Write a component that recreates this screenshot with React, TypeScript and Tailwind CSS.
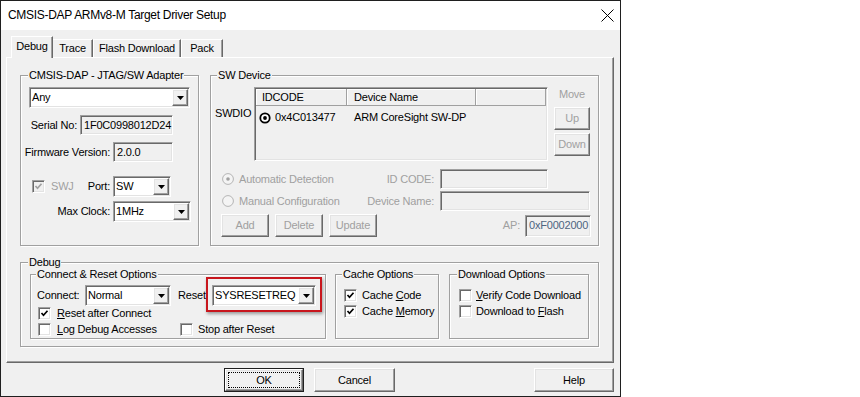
import React from "react";

const sunken =
  "border border-t-[#a0a0a0] border-l-[#a0a0a0] border-r-white border-b-white shadow-[inset_1px_1px_0_#696969,inset_-1px_-1px_0_#e3e3e3]";
const raised =
  "border border-t-white border-l-white border-r-[#696969] border-b-[#696969] shadow-[inset_-1px_-1px_0_#a0a0a0,inset_1px_1px_0_#e3e3e3]";
const etched = "border border-[#a0a0a0] shadow-[inset_1px_1px_0_#fff,1px_1px_0_#fff]";

function Arrow() {
  return (
    <svg width="7" height="4" viewBox="0 0 7 4">
      <path d="M0 0H7L3.5 4Z" fill="#000" />
    </svg>
  );
}

function Combo({ className, value }: { className: string; value: string }) {
  return (
    <div className={`${sunken} ${className} bg-white h-[21px] flex p-[1px] shrink-0`}>
      <div className="flex-1 pl-[1px] flex items-center whitespace-nowrap overflow-hidden">{value}</div>
      <div className={`${raised} w-[16px] bg-[#f0f0f0] flex items-center justify-center`}>
        <Arrow />
      </div>
    </div>
  );
}

function TextBox({ className, children }: { className: string; children?: React.ReactNode }) {
  return (
    <div className={`${sunken} ${className} bg-[#f0f0f0] flex items-center pl-[3px] whitespace-nowrap shrink-0`}>
      {children}
    </div>
  );
}

function Btn({
  className,
  label,
  disabled,
}: {
  className: string;
  label: React.ReactNode;
  disabled?: boolean;
}) {
  return (
    <div
      className={`${raised} ${className} bg-[#f0f0f0] flex items-center justify-center shrink-0 ${
        disabled ? "text-[#a0a0a0]" : "text-black"
      }`}
    >
      {label}
    </div>
  );
}

function Check({ checked, disabled }: { checked?: boolean; disabled?: boolean }) {
  return (
    <div
      className={`${sunken} w-[13px] h-[13px] shrink-0 flex items-center justify-center ${
        disabled ? "bg-[#f0f0f0]" : "bg-white"
      }`}
    >
      {checked && (
        <svg width="9" height="9" viewBox="0 0 9 9">
          <polyline
            points="1.5,4 3.5,6.2 7.5,1.8"
            fill="none"
            stroke={disabled ? "#a0a0a0" : "#000"}
            strokeWidth="1.7"
          />
        </svg>
      )}
    </div>
  );
}

function Radio({ checked }: { checked?: boolean }) {
  return (
    <svg width="12" height="12" viewBox="0 0 12 12" className="shrink-0">
      <circle cx="6" cy="6" r="5.4" fill="#f4f4f4" stroke="#b4b4b4" strokeWidth="1" />
      {checked && <circle cx="6" cy="6" r="1.8" fill="#a0a0a0" />}
    </svg>
  );
}

function GroupLabel({ className, text }: { className: string; text: string }) {
  return (
    <div className={`-mt-[7px] h-[13px] px-[1px] bg-[#f0f0f0] self-start whitespace-nowrap ${className}`}>
      {text}
    </div>
  );
}

function U({ children }: { children: React.ReactNode }) {
  return <span className="underline underline-offset-[1px]">{children}</span>;
}

export default function App() {
  return (
    <div className="w-[860px] h-[397px] bg-white font-['Liberation_Sans',Arial,sans-serif] text-[11px] leading-[13px] tracking-[-0.2px] text-black">
      <div className="w-[621px] h-[397px] border border-[#1f1f1f] flex flex-col bg-[#f0f0f0]">
        {/* Title bar */}
        <div className="h-[29px] shrink-0 bg-white flex items-center">
          <div className="pl-[7px] text-[12px] tracking-[-0.3px]">CMSIS-DAP ARMv8-M Target Driver Setup</div>
          <div className="ml-auto mr-[6px] flex items-center">
            <svg width="13" height="13" viewBox="0 0 13 13">
              <path d="M0.5 0.5L12.5 12.5M12.5 0.5L0.5 12.5" stroke="#000" strokeWidth="1" />
            </svg>
          </div>
        </div>

        {/* Tabs */}
        <div className="h-[27px] shrink-0 flex items-end pl-[10px]">
          <div className="relative z-10 -mb-px h-[22px] w-[42px] bg-[#f0f0f0] border-t border-l border-r border-t-white border-l-white border-r-[#696969] shadow-[inset_-1px_0_0_#a0a0a0] flex items-center justify-center pb-[2px]">
            Debug
          </div>
          <div className="h-[18px] w-[40px] border-t border-r border-t-white border-r-[#696969] shadow-[inset_-1px_0_0_#a0a0a0] flex items-center justify-center">
            Trace
          </div>
          <div className="h-[18px] w-[88px] border-t border-l border-r border-t-white border-l-white border-r-[#696969] shadow-[inset_-1px_0_0_#a0a0a0] flex items-center justify-center">
            Flash Download
          </div>
          <div className="h-[18px] w-[42px] border-t border-l border-r border-t-white border-l-white border-r-[#696969] shadow-[inset_-1px_0_0_#a0a0a0] flex items-center justify-center">
            Pack
          </div>
        </div>

        {/* Tab panel */}
        <div className="ml-[5px] w-[608px] h-[306px] shrink-0 border border-t-white border-l-white border-r-[#696969] border-b-[#696969] shadow-[inset_-1px_-1px_0_#a0a0a0] flex flex-col">
          {/* Top row */}
          <div className="flex mt-[17px] ml-[13px]">
            {/* Adapter group */}
            <div className={`${etched} w-[179px] h-[171px] flex flex-col`}>
              <GroupLabel className="ml-[7px]" text="CMSIS-DAP - JTAG/SW Adapter" />
              <Combo className="mt-[5px] ml-[8px] w-[161px]" value="Any" />
              <div className="mt-[7px] flex items-center h-[20px]">
                <div className="w-[56px] text-right whitespace-nowrap">Serial No:</div>
                <TextBox className="ml-[3px] w-[93px] h-[20px]">1F0C0998012D24</TextBox>
              </div>
              <div className="mt-[7px] flex items-center h-[20px]">
                <div className="w-[89px] text-right whitespace-nowrap">Firmware Version:</div>
                <TextBox className="ml-[3px] w-[60px] h-[20px]">2.0.0</TextBox>
              </div>
              <div className="mt-[14px] flex items-center">
                <div className="w-[89px] flex items-center">
                  <div className="ml-[11px]">
                    <Check checked disabled />
                  </div>
                  <span className="ml-[6px] text-[#a0a0a0]">SWJ</span>
                  <span className="ml-auto">Port:</span>
                </div>
                <Combo className="ml-[3px] w-[58px]" value="SW" />
              </div>
              <div className="mt-[4px] flex items-center">
                <div className="w-[89px] text-right whitespace-nowrap">Max Clock:</div>
                <Combo className="ml-[3px] w-[78px]" value="1MHz" />
              </div>
            </div>

            {/* SW Device group */}
            <div className={`${etched} ml-[11px] w-[389px] h-[171px] flex flex-col`}>
              <GroupLabel className="ml-[6px]" text="SW Device" />
              <div className="mt-[5px] flex items-start">
                <div className="w-[43px] pl-[4px] pt-[20px]">SWDIO</div>
                <div className={`${sunken} w-[294px] h-[74px] p-[1px] bg-[#f0f0f0] flex flex-col`}>
                  <div className="flex h-[17px]">
                    <div className="w-[91px] pl-[6px] flex items-center border-r border-b border-[#a0a0a0] shadow-[inset_1px_1px_0_#fff]">
                      IDCODE
                    </div>
                    <div className="w-[129px] pl-[7px] flex items-center border-r border-b border-[#a0a0a0] shadow-[inset_1px_1px_0_#fff]">
                      Device Name
                    </div>
                    <div className="flex-1 border-r border-b border-[#a0a0a0] shadow-[inset_1px_1px_0_#fff]" />
                  </div>
                  <div className="flex h-[17px] mt-[3px] items-center whitespace-nowrap">
                    <div className="w-[91px] flex items-center">
                      <svg width="12" height="12" viewBox="0 0 12 12" className="ml-[3px] shrink-0">
                        <circle cx="6" cy="6" r="4.7" fill="#fff" stroke="#000" strokeWidth="1.8" />
                        <circle cx="6" cy="6" r="1.9" fill="#000" />
                      </svg>
                      <span className="ml-[4px]">0x4C013477</span>
                    </div>
                    <div className="pl-[7px]">ARM CoreSight SW-DP</div>
                  </div>
                </div>
                <div className="ml-[6px] w-[36px] flex flex-col items-center">
                  <div className="mt-[1px] text-[#a0a0a0]">Move</div>
                  <Btn className="mt-[6px] w-[36px] h-[23px]" label="Up" disabled />
                  <Btn className="mt-[3px] w-[36px] h-[23px]" label="Down" disabled />
                </div>
              </div>
              <div className="mt-[8px] flex items-center h-[20px]">
                <div className="w-[229px] flex items-center text-[#a0a0a0] whitespace-nowrap">
                  <div className="ml-[11px]">
                    <Radio checked />
                  </div>
                  <span className="ml-[5px]">Automatic Detection</span>
                  <span className="ml-auto pr-[6px]">ID CODE:</span>
                </div>
                <TextBox className="w-[108px] h-[20px]" />
              </div>
              <div className="mt-[2px] flex items-center h-[20px]">
                <div className="w-[229px] flex items-center text-[#a0a0a0] whitespace-nowrap">
                  <div className="ml-[11px]">
                    <Radio />
                  </div>
                  <span className="ml-[5px]">Manual Configuration</span>
                  <span className="ml-auto pr-[6px]">Device Name:</span>
                </div>
                <TextBox className="w-[150px] h-[20px]" />
              </div>
              <div className="mt-[3px] flex items-center pr-[7px]">
                <Btn className="ml-[10px] w-[48px] h-[23px]" label="Add" disabled />
                <Btn className="ml-[6px] w-[48px] h-[23px]" label="Delete" disabled />
                <Btn className="ml-[6px] w-[48px] h-[23px]" label="Update" disabled />
                <span className="ml-auto text-[#a0a0a0]">AP:</span>
                <TextBox className="ml-[5px] w-[66px] h-[22px] text-[#4e6480] pl-[2px]">0xF0002000</TextBox>
              </div>
            </div>
          </div>

          {/* Debug group */}
          <div className={`${etched} mt-[16px] ml-[13px] w-[579px] h-[85px] flex flex-col`}>
            <GroupLabel className="ml-[7px]" text="Debug" />
            <div className="mt-[5px] flex items-start">
              {/* Connect & Reset */}
              <div className={`${etched} ml-[9px] w-[296px] h-[65px] flex flex-col`}>
                <GroupLabel className="ml-[5px]" text="Connect & Reset Options" />
                <div className="mt-[4px] flex items-center">
                  <div className="w-[54px] pl-[6px] whitespace-nowrap">Connect:</div>
                  <Combo className="w-[86px]" value="Normal" />
                  <div className="w-[41px] pl-[7px]">Reset</div>
                  <div className="relative">
                    <Combo className="w-[104px]" value="SYSRESETREQ" />
                    <div className="absolute -left-[6px] -right-[6px] -top-[8px] -bottom-[6px] border-2 border-[#c8161d] shadow-[1px_2px_3px_rgba(0,0,0,0.35)] pointer-events-none" />
                  </div>
                </div>
                <div className="mt-[1px] flex items-center h-[13px]">
                  <div className="ml-[7px]">
                    <Check checked />
                  </div>
                  <span className="ml-[6px] whitespace-nowrap">
                    <U>R</U>eset after Connect
                  </span>
                </div>
                <div className="mt-[3px] flex items-center h-[13px]">
                  <div className="w-[149px] flex items-center">
                    <div className="ml-[7px]">
                      <Check />
                    </div>
                    <span className="ml-[6px] whitespace-nowrap">
                      <U>L</U>og Debug Accesses
                    </span>
                  </div>
                  <Check />
                  <span className="ml-[5px] whitespace-nowrap">Stop after Reset</span>
                </div>
              </div>

              {/* Cache Options */}
              <div className={`${etched} ml-[9px] w-[104px] h-[65px] flex flex-col`}>
                <GroupLabel className="ml-[6px]" text="Cache Options" />
                <div className="mt-[8px] flex items-center h-[13px]">
                  <div className="ml-[8px]">
                    <Check checked />
                  </div>
                  <span className="ml-[5px] whitespace-nowrap">
                    Cache <U>C</U>ode
                  </span>
                </div>
                <div className="mt-[3px] flex items-center h-[13px]">
                  <div className="ml-[8px]">
                    <Check checked />
                  </div>
                  <span className="ml-[5px] whitespace-nowrap">
                    Cache <U>M</U>emory
                  </span>
                </div>
              </div>

              {/* Download Options */}
              <div className={`${etched} ml-[10px] w-[140px] h-[65px] flex flex-col`}>
                <GroupLabel className="ml-[7px]" text="Download Options" />
                <div className="mt-[8px] flex items-center h-[13px]">
                  <div className="ml-[9px]">
                    <Check />
                  </div>
                  <span className="ml-[4px] whitespace-nowrap">
                    <U>V</U>erify Code Download
                  </span>
                </div>
                <div className="mt-[3px] flex items-center h-[13px]">
                  <div className="ml-[9px]">
                    <Check />
                  </div>
                  <span className="ml-[4px] whitespace-nowrap">
                    Download to <U>F</U>lash
                  </span>
                </div>
              </div>
            </div>
          </div>
        </div>

        {/* Bottom buttons */}
        <div className="mt-[5px] flex pl-[223px] pr-[6px]">
          <div className="w-[80px] h-[24px] border border-[#1f1f1f] flex">
            <div className={`${raised} flex-1 p-[2px] flex bg-[#f0f0f0]`}>
              <div className="flex-1 border border-dotted border-black flex items-center justify-center">OK</div>
            </div>
          </div>
          <Btn className="ml-[10px] w-[81px] h-[24px]" label="Cancel" />
          <Btn className="ml-auto w-[80px] h-[24px]" label="Help" />
        </div>
      </div>
    </div>
  );
}
